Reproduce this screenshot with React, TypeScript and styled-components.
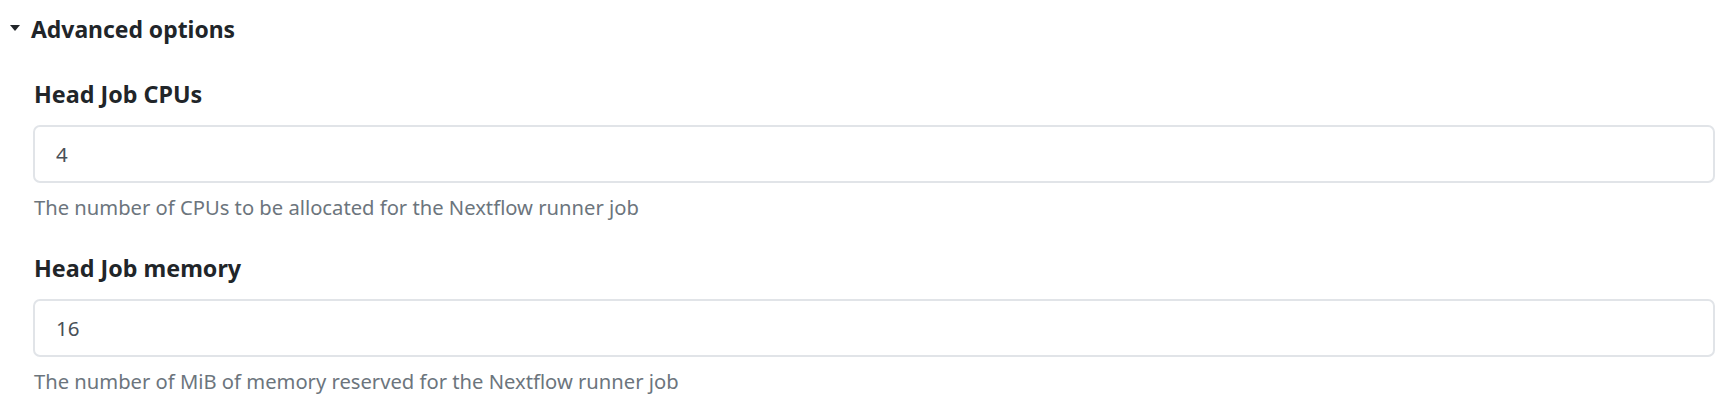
import React from 'react';
import styled, { createGlobalStyle } from 'styled-components';

const GlobalStyle = createGlobalStyle`
  html, body {
    margin: 0;
    padding: 0;
    background: #ffffff;
  }
  body {
    font-family: 'Noto Sans', 'Open Sans', Arial, sans-serif;
    color: #212529;
  }
`;

interface Field {
  label: string;
  value: string;
  help: string;
}

const fields: Field[] = [
  {
    label: 'Head Job CPUs',
    value: '4',
    help: 'The number of CPUs to be allocated for the Nextflow runner job',
  },
  {
    label: 'Head Job memory',
    value: '16',
    help: 'The number of MiB of memory reserved for the Nextflow runner job',
  },
];

const App = () => {
  return (
    <>
      <GlobalStyle />
      <Page>
        <Summary>
          <Caret />
          <SummaryText>Advanced options</SummaryText>
        </Summary>
        <Fields>
          {fields.map(field => (
            <Group key={field.label}>
              <Label>{field.label}</Label>
              <Input type="text" defaultValue={field.value} />
              <Help>{field.help}</Help>
            </Group>
          ))}
        </Fields>
      </Page>
    </>
  );
};

export default App;

const Page = styled.div`
  width: 1736px;
  height: 413px;
  box-sizing: border-box;
  padding: 15px 21px 0 10px;
`;

const Summary = styled.div`
  display: flex;
  align-items: center;
  gap: 11px;
  height: 30px;
`;

const Caret = styled.span`
  display: block;
  width: 0;
  height: 0;
  border-left: 5px solid transparent;
  border-right: 5px solid transparent;
  border-top: 6px solid #212529;
  margin-top: -4px;
`;

const SummaryText = styled.span`
  font-size: 22.9px;
  font-weight: 700;
  line-height: 30px;
`;

const Fields = styled.div`
  display: flex;
  flex-direction: column;
  gap: 33px;
  padding: 34px 0 0 23px;
`;

const Group = styled.div`
  display: flex;
  flex-direction: column;
`;

const Label = styled.label`
  font-size: 23.3px;
  font-weight: 700;
  line-height: 30px;
  padding-left: 1px;
  margin-bottom: 16px;
`;

const Input = styled.input`
  box-sizing: border-box;
  width: 100%;
  height: 58px;
  padding: 0 21px;
  border: 2px solid #e1e4e8;
  border-radius: 7px;
  background: #ffffff;
  font-family: 'Noto Sans', 'Open Sans', Arial, sans-serif;
  font-size: 20.5px;
  color: #495057;
  outline: none;
`;

const Help = styled.div`
  margin-top: 11px;
  font-size: 20.2px;
  line-height: 26px;
  color: #6c757d;
  padding-left: 1px;
`;
